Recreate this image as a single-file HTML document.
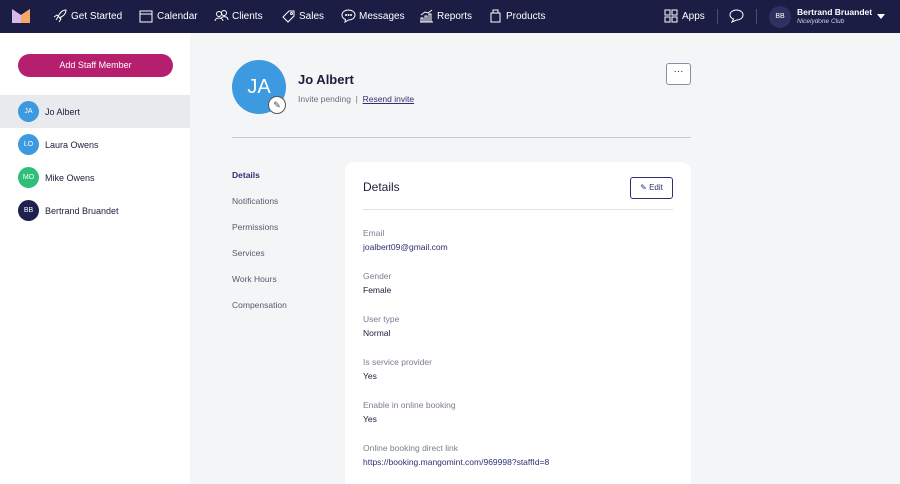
<!DOCTYPE html><html><head><style>
*{box-sizing:border-box;margin:0;padding:0}
html,body{width:900px;height:484px;overflow:hidden}
body{background:#f4f5f7;font-family:"Liberation Sans",sans-serif;position:relative;color:#1c1e3a}
.nav{position:absolute;left:0;top:0;width:900px;height:33px;background:#1b1d45;color:#fff;font-size:10px}
.nav span{position:absolute;top:11px}
.nav svg{position:absolute;top:9px}
.side{position:absolute;left:0;top:33px;width:190px;height:451px;background:#fff}
.btn{position:absolute;left:18px;top:21px;width:155px;height:23px;border-radius:12px;background:#b51f6e;color:#fff;font-size:9px;text-align:center;line-height:23px}
.row{position:absolute;left:0;width:190px;height:33px;font-size:9px}
.row .av{position:absolute;left:18px;top:6px;width:21px;height:21px;border-radius:50%;color:#fff;font-size:7px;text-align:center;line-height:21px}
.row .n{position:absolute;left:45px;top:12px}
.abs{position:absolute}
.tab{position:absolute;left:232px;font-size:8.5px;color:#555a6e}
.card{position:absolute;left:345px;top:162px;width:346px;height:322px;background:#fff;border-radius:9px 9px 0 0}
.lab{position:absolute;left:18px;font-size:8.5px;color:#7a7e90}
.val{position:absolute;left:18px;font-size:8.5px;color:#1c1e3a}
</style></head><body>
<div class="nav">
<svg style="left:12px;top:9px" width="18" height="14"><path d="M0 0L9 6L18 0V14H0Z" fill="#d9b8f0"/><path d="M9 6L18 0V14H9Z" fill="#f7a866"/></svg>
<svg style="left:53px" width="14" height="14" fill="none" stroke="#fff" stroke-width="1"><path d="M3 11L5 8M6 13L8 10M1 8L4 6L8 10L6 13M5 8C7 3 10 1 13 1C13 4 11 7 6 9"/></svg><span style="left:71px">Get Started</span>
<svg style="left:139px" width="14" height="14" fill="none" stroke="#fff"><rect x="1" y="2" width="12" height="11"/><path d="M1 5H13"/></svg><span style="left:157px">Calendar</span>
<svg style="left:214px" width="15" height="14" fill="none" stroke="#fff"><circle cx="5" cy="5" r="2.5"/><circle cx="10" cy="4" r="2.5"/><path d="M1 12C1 8 9 8 9 12M7 9C9 7 14 7 14 11"/></svg><span style="left:232px">Clients</span>
<svg style="left:281px" width="15" height="14" fill="none" stroke="#fff"><path d="M2 8L8 2H13V7L7 13Z"/><circle cx="10.5" cy="4.5" r="1"/></svg><span style="left:299px">Sales</span>
<svg style="left:341px" width="15" height="14" fill="none" stroke="#fff"><path d="M7.5 1C11 1 14 3 14 6C14 9 11 11 7.5 11L4 13L4.5 10.5C2 9.5 1 8 1 6C1 3 4 1 7.5 1Z"/><circle cx="5" cy="6" r=".5"/><circle cx="7.5" cy="6" r=".5"/><circle cx="10" cy="6" r=".5"/></svg><span style="left:359px">Messages</span>
<svg style="left:419px" width="15" height="14" fill="none" stroke="#fff"><path d="M1 13H14M2 13V9H4V13M6 13V7H8V13M10 13V5H12V13M2 6L6 3L9 4L13 1"/></svg><span style="left:437px">Reports</span>
<svg style="left:489px" width="13" height="14" fill="none" stroke="#fff"><path d="M2 4H11V13H2ZM4 4V1H9V4"/></svg><span style="left:506px">Products</span>
<svg style="left:664px" width="14" height="14" fill="none" stroke="#fff"><rect x="1" y="1" width="5" height="5"/><rect x="8" y="1" width="5" height="5"/><rect x="1" y="8" width="5" height="5"/><rect x="8" y="8" width="5" height="5"/></svg><span style="left:682px">Apps</span>
<div class="abs" style="left:717px;top:9px;width:1px;height:15px;background:#4a4d75"></div>
<svg style="left:729px" width="15" height="14" fill="none" stroke="#fff"><path d="M7.5 1C11 1 14 3 14 6C14 9 11 11 7.5 11L3 13L4.5 10C2 9 1 8 1 6C1 3 4 1 7.5 1Z"/></svg>
<div class="abs" style="left:756px;top:9px;width:1px;height:15px;background:#4a4d75"></div>
<div class="abs" style="left:769px;top:6px;width:22px;height:22px;border-radius:50%;background:#2e3160;font-size:7px;text-align:center;line-height:22px">BB</div>
<span style="left:797px;top:7px;font-weight:bold;font-size:8.5px">Bertrand Bruandet</span>
<span style="left:797px;top:18px;font-style:italic;font-size:6.5px;color:#d0d2e0">Nicelydone Club</span>
<svg style="left:877px;top:14px" width="8" height="5"><path d="M0 0H8L4 5Z" fill="#fff"/></svg>
</div>
<div class="side">
<div class="btn">Add Staff Member</div>
<div class="row" style="top:62px;background:#e8eaee"><div class="av" style="background:#3d9ae0">JA</div><div class="n">Jo Albert</div></div>
<div class="row" style="top:95px"><div class="av" style="background:#3d9ae0">LO</div><div class="n">Laura Owens</div></div>
<div class="row" style="top:128px"><div class="av" style="background:#30bf78">MO</div><div class="n">Mike Owens</div></div>
<div class="row" style="top:161px"><div class="av" style="background:#1e2150">BB</div><div class="n">Bertrand Bruandet</div></div>
</div>
<div class="abs" style="left:232px;top:60px;width:54px;height:54px;border-radius:50%;background:#3d9ae0;color:#fff;font-size:20px;text-align:center;line-height:54px">JA</div>
<div class="abs" style="left:268px;top:96px;width:18px;height:18px;border-radius:50%;background:#fff;border:1px solid #555;font-size:9px;text-align:center;line-height:16px;color:#444">✎</div>
<div class="abs" style="left:298px;top:72px;font-size:13px;font-weight:bold">Jo Albert</div>
<div class="abs" style="left:298px;top:94px;font-size:8.5px;color:#6a6e80">Invite pending &nbsp;| &nbsp;<span style="color:#2e3170;text-decoration:underline">Resend invite</span></div>
<div class="abs" style="left:666px;top:63px;width:25px;height:22px;border:1px solid #8a8ea0;border-radius:3px;background:#fff;text-align:center;font-size:10px;line-height:16px">···</div>
<div class="abs" style="left:232px;top:137px;width:459px;height:1px;background:#c8cbd6"></div>
<div class="tab" style="top:170px;color:#2e3170;font-weight:bold">Details</div>
<div class="tab" style="top:196px">Notifications</div>
<div class="tab" style="top:222px">Permissions</div>
<div class="tab" style="top:248px">Services</div>
<div class="tab" style="top:274px">Work Hours</div>
<div class="tab" style="top:300px">Compensation</div>
<div class="card">
<div class="abs" style="left:18px;top:18px;font-size:12px">Details</div>
<div class="abs" style="left:285px;top:15px;width:43px;height:22px;border:1px solid #2e3170;border-radius:3px;font-size:8px;text-align:center;line-height:20px;color:#2e3170">✎ Edit</div>
<div class="abs" style="left:18px;top:47px;width:310px;height:1px;background:#e0e2e8"></div>
<div class="lab" style="top:66px">Email</div><div class="val" style="top:80px;color:#2e3170">joalbert09@gmail.com</div>
<div class="lab" style="top:109px">Gender</div><div class="val" style="top:123px">Female</div>
<div class="lab" style="top:152px">User type</div><div class="val" style="top:166px">Normal</div>
<div class="lab" style="top:195px">Is service provider</div><div class="val" style="top:209px">Yes</div>
<div class="lab" style="top:238px">Enable in online booking</div><div class="val" style="top:252px">Yes</div>
<div class="lab" style="top:281px">Online booking direct link</div><div class="val" style="top:295px;color:#2e3170">https://booking.mangomint.com/969998?staffId=8</div>
</div>
</body></html>
